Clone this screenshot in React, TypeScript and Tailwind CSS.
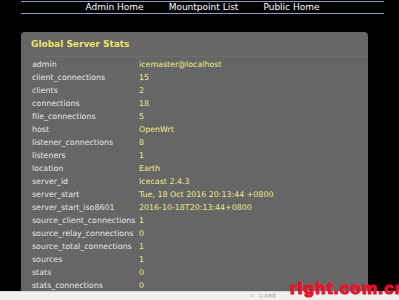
import React from "react";

const stats: [string, string][] = [
    ["admin", "icemaster@localhost"],
    ["client_connections", "15"],
    ["clients", "2"],
    ["connections", "18"],
    ["file_connections", "5"],
    ["host", "OpenWrt"],
    ["listener_connections", "8"],
    ["listeners", "1"],
    ["location", "Earth"],
    ["server_id", "Icecast 2.4.3"],
    ["server_start", "Tue, 18 Oct 2016 20:13:44 +0800"],
    ["server_start_iso8601", "2016-10-18T20:13:44+0800"],
    ["source_client_connections", "1"],
    ["source_relay_connections", "0"],
    ["source_total_connections", "1"],
    ["sources", "1"],
    ["stats", "0"],
    ["stats_connections", "0"],
]

const App = () => {
    return (
        <div className="relative w-[399px] h-[300px] overflow-hidden bg-black" style={{ fontFamily: '"DejaVu Sans", Verdana, sans-serif' }}>
            <div className="ml-[21px] w-[363px] pt-px">
                <div className="flex justify-center gap-[25px] h-[13px] border-y border-[#8e9cc0] text-[9px] leading-[11px] text-white">
                    <span>Admin Home</span>
                    <span>Mountpoint List</span>
                    <span>Public Home</span>
                </div>
            </div>
            <div className="ml-[21px] mt-[18px] w-[347px] h-[300px] rounded-[4px] bg-[#666666] pl-[10px] pt-[6px]">
                <h2 className="text-[9px] leading-[13px] font-bold text-[#f0e468]">Global Server Stats</h2>
                <div className="mt-[5px] border-t border-[#6e6e6e] pt-px">
                    {stats.map(([key, value]) => (
                        <div key={key} className="flex h-[13px] items-center text-[7.9px]">
                            <span className="w-[108px] pl-px text-[#e4e4e4] whitespace-nowrap">{key}</span>
                            <span className="text-[#ecec88] whitespace-nowrap">{value}</span>
                        </div>
                    ))}
                </div>
            </div>
            <div className="absolute left-0 top-[291px] w-full h-[9px] bg-[#f0f0f0] border-t border-[#d8d8d8] flex items-center pl-[250px] gap-[6px] text-[4px] text-[#999]">
                <span>⊡</span>
                <span>☑ 加速器</span>
            </div>
            <div className="absolute left-[290px] top-[280px] text-[17px] leading-[18px] font-bold text-[#e8102a] tracking-[1.2px] whitespace-nowrap [-webkit-text-stroke:1.2px_#e8102a]" style={{ fontFamily: '"Liberation Sans", Arial, sans-serif' }}>
                right.com.cn
            </div>
        </div>
    )
}

export default App;
